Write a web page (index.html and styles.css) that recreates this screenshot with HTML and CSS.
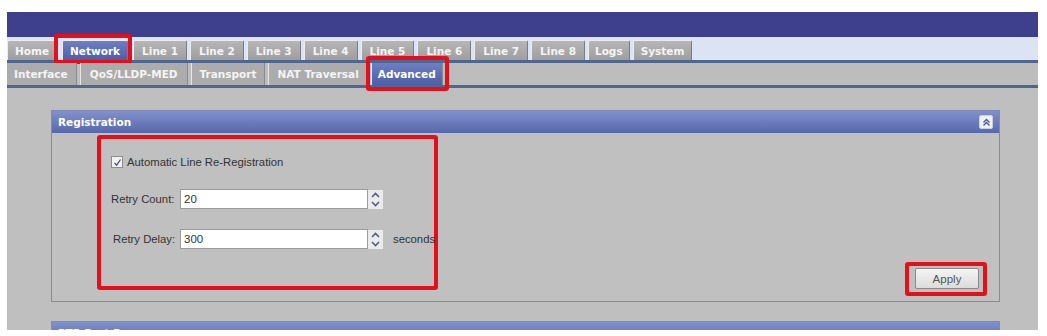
FILE: index.html
```html
<!DOCTYPE html>
<html lang="en">
  <head>
    <meta charset="UTF-8" />
    <title>Advanced - Registration</title>
    <link rel="stylesheet" href="styles.css">
  </head>
  <body>
    <div class="page">
      <div class="banner"></div>

      <div class="tabs">
        <div class="tab home">Home</div>
        <div class="tab active marked">Network</div>
        <div class="tab">Line 1</div>
        <div class="tab">Line 2</div>
        <div class="tab">Line 3</div>
        <div class="tab">Line 4</div>
        <div class="tab">Line 5</div>
        <div class="tab">Line 6</div>
        <div class="tab">Line 7</div>
        <div class="tab">Line 8</div>
        <div class="tab logs">Logs</div>
        <div class="tab system">System</div>
      </div>

      <div class="subtabs">
        <div class="subtab">Interface</div>
        <div class="subtab">QoS/LLDP-MED</div>
        <div class="subtab">Transport</div>
        <div class="subtab">NAT Traversal</div>
        <div class="subtab active marked">Advanced</div>
      </div>

      <div class="content">
        <div class="panel">
          <div class="panel-header">
            <span>Registration</span>
            <span class="collapse">
              <svg width="9" height="9" viewBox="0 0 9 9">
                <path d="M1.5 4.5 L4.5 1.5 L7.5 4.5 M1.5 7.5 L4.5 4.5 L7.5 7.5" fill="none" stroke="#4a5b8f" stroke-width="1.3"/>
              </svg>
            </span>
          </div>
          <div class="panel-body">
            <div class="highlight">
              <label class="check-row">
                <span class="checkbox">
                  <svg width="9" height="9" viewBox="0 0 9 9">
                    <path d="M1.5 4.8 L3.6 7.2 L7.5 1.5" fill="none" stroke="#3a4a7a" stroke-width="1.2"/>
                  </svg>
                </span>
                Automatic Line Re-Registration
              </label>

              <div class="field-row">
                <span class="field-label">Retry Count:</span>
                <input class="field-input" type="text" value="20" />
                <span class="spinner">
                  <svg width="15" height="19" viewBox="0 0 15 19">
                    <path d="M4 7 L7.5 3.5 L11 7 M4 12 L7.5 15.5 L11 12" fill="none" stroke="#4f5f8a" stroke-width="1.6"/>
                  </svg>
                </span>
              </div>

              <div class="field-row delay">
                <span class="field-label">Retry Delay:</span>
                <input class="field-input" type="text" value="300" />
                <span class="spinner">
                  <svg width="15" height="19" viewBox="0 0 15 19">
                    <path d="M4 7 L7.5 3.5 L11 7 M4 12 L7.5 15.5 L11 12" fill="none" stroke="#4f5f8a" stroke-width="1.6"/>
                  </svg>
                </span>
                <span class="unit">seconds</span>
              </div>
            </div>

            <div class="apply-mark">
              <button class="apply">Apply</button>
            </div>
          </div>
        </div>

        <div class="panel next">
          <div class="panel-header">
            <span>RTP Port Range</span>
          </div>
        </div>
      </div>
    </div>
  </body>
</html>
```

FILE: styles.css
```css
* {
  margin: 0;
  padding: 0;
  box-sizing: border-box;
}
body {
  background: #fff;
  font-family: "Liberation Sans", Arial, sans-serif;
  font-size: 11.3px;
  color: #333;
}
.page {
  margin: 12px 0 0 7px;
  width: 1031px;
  height: 318px;
  overflow: hidden;
  background: #bfbfbf;
}
.banner {
  height: 25px;
  background: #3e408d;
}
.tabs {
  height: 26px;
  display: flex;
  align-items: flex-end;
  gap: 3px;
  background: #dce3f3;
  border-bottom: 3px solid #4f6690;
}
.tab {
  position: relative;
  height: 20px;
  padding: 0 8px;
  display: flex;
  align-items: center;
  font-family: "DejaVu Sans", Verdana, sans-serif;
  font-size: 10.5px;
  font-weight: bold;
  color: #f4f4f4;
  background: linear-gradient(#b6b6b6, #9e9e9e);
  border: 1px solid #ececec;
  border-right-color: #7c7c7c;
  border-bottom: none;
  border-radius: 2px 2px 0 0;
}
.tab.home {
  padding: 0 7px;
  margin-right: 2px;
}
.tab.logs {
  padding: 0 6px;
}
.tab.system {
  padding: 0 7px;
}
.tab.active {
  background: linear-gradient(#6e7fc4, #4d5ea6);
  color: #fff;
  padding: 0 7px;
  margin-right: 2px;
}
.marked::after {
  content: "";
  position: absolute;
  top: -7px;
  bottom: -4px;
  left: -9px;
  right: -5px;
  border: 4px solid #e3101c;
  border-radius: 3px;
}
.subtabs {
  height: 25px;
  display: flex;
  gap: 3px;
  background: #bdbdbd;
  border-bottom: 3px solid #4f6690;
}
.subtab {
  position: relative;
  height: 22px;
  padding: 0 8px;
  display: flex;
  align-items: center;
  font-family: "DejaVu Sans", Verdana, sans-serif;
  font-size: 10.5px;
  font-weight: bold;
  color: #f4f4f4;
  background: #acacac;
  border-left: 1px solid #e6e6e6;
  border-right: 1px solid #8a8a8a;
}
.subtab:first-child {
  border-left: none;
  padding-left: 7px;
}
.subtab:nth-child(2) {
  padding: 0 9px;
}
.subtab.active {
  background: linear-gradient(#6e7fc4, #4d5ea6);
  color: #fff;
  padding: 0 6px;
}
.subtab.marked::after {
  top: -7px;
  bottom: -6px;
  left: -6px;
  right: -7px;
}
.content {
  padding: 22px 38px 0 44px;
}
.panel {
  border: 1px solid #8189b2;
  background: #c0c0c0;
}
.panel.next {
  margin-top: 19px;
}
.panel-header {
  height: 22px;
  padding: 0 6px;
  display: flex;
  align-items: center;
  justify-content: space-between;
  font-family: "DejaVu Sans", Verdana, sans-serif;
  font-size: 10.5px;
  font-weight: bold;
  color: #fff;
  background: linear-gradient(#8191cc, #5767aa);
}
.collapse {
  width: 14px;
  height: 14px;
  display: flex;
  align-items: center;
  justify-content: center;
  background: #eef1f8;
  border: 1px solid #c9d0e6;
  border-radius: 2px;
}
.panel-body {
  height: 168px;
  display: flex;
  justify-content: space-between;
  padding: 2px 12px 0 45px;
}
.highlight {
  width: 341px;
  height: 155px;
  border: 4px solid #e3101c;
  border-radius: 3px;
  padding: 17px 0 0 10px;
}
.check-row {
  display: flex;
  align-items: center;
  gap: 4px;
  height: 12px;
}
.checkbox {
  width: 12px;
  height: 12px;
  display: flex;
  align-items: center;
  justify-content: center;
  background: #f2f2f2;
  border: 1px solid #8d8d8d;
}
.field-row {
  display: flex;
  align-items: center;
  margin-top: 21px;
  height: 20px;
  white-space: nowrap;
}
.field-row > * {
  flex-shrink: 0;
}
.field-row.delay {
  margin-top: 20px;
  padding-left: 2px;
}
.field-label {
  width: 69px;
}
.delay .field-label {
  width: 67px;
}
.field-input {
  width: 188px;
  height: 20px;
  padding: 0 3px;
  font-family: "Liberation Sans", Arial, sans-serif;
  font-size: 11.5px;
  color: #333;
  background: #fff;
  border: 1px solid #9c9c9c;
  outline: none;
}
.spinner {
  width: 15px;
  height: 19px;
  display: flex;
  background: #ebebeb;
}
.unit {
  margin-left: 10px;
}
.apply-mark {
  align-self: flex-end;
  margin-bottom: 5px;
  padding: 2px 4px 3px 6px;
  border: 4px solid #e3101c;
  border-radius: 3px;
}
.apply {
  display: block;
  width: 64px;
  height: 21px;
  font-family: "Liberation Sans", Arial, sans-serif;
  font-size: 11.5px;
  color: #555;
  background: linear-gradient(#f4f4f4, #dcdcdc);
  border: 1px solid #8a8a8a;
  border-radius: 2px;
}
```
